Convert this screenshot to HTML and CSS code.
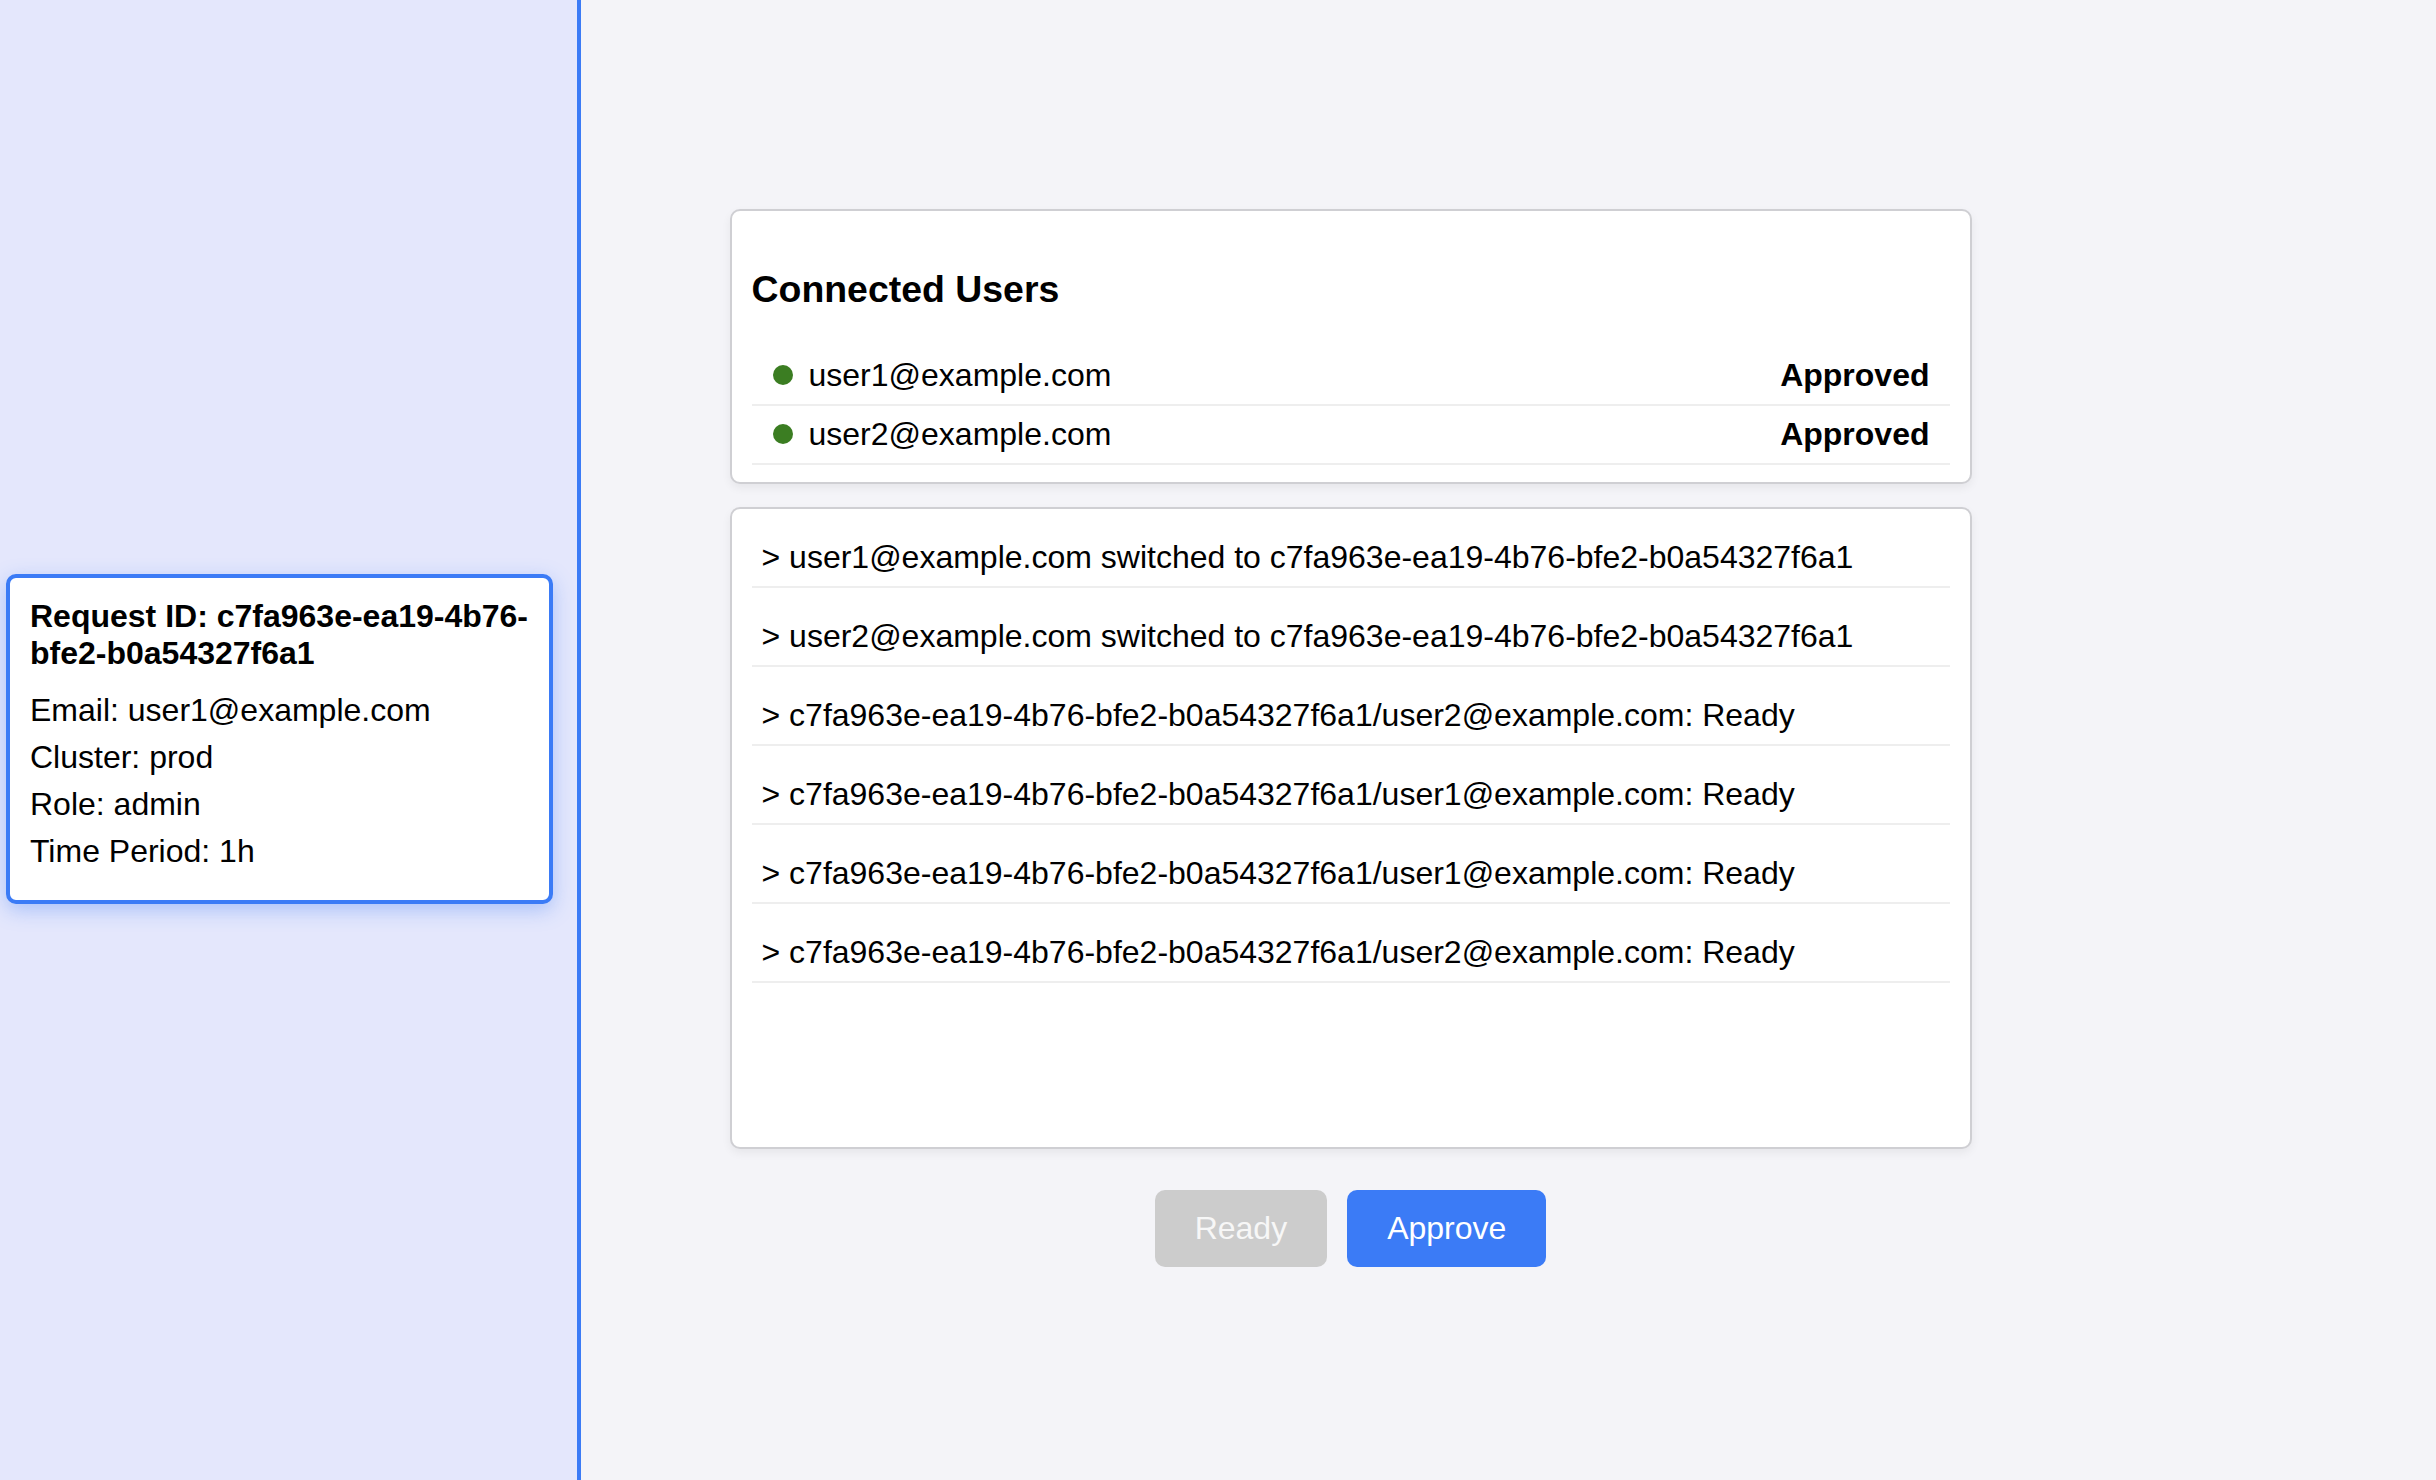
FILE: index.html
```html
<!DOCTYPE html>
<html lang="en">
<head>
<meta charset="utf-8">
<title>Request Approval</title>
<link rel="stylesheet" href="styles.css">
</head>
<body>
<div class="layout">
  <aside class="sidebar">
    <div class="request-card">
      <h4 class="request-title">Request ID: c7fa963e-ea19-4b76-bfe2-b0a54327f6a1</h4>
      <p class="request-line">Email: user1@example.com</p>
      <p class="request-line">Cluster: prod</p>
      <p class="request-line">Role: admin</p>
      <p class="request-line">Time Period: 1h</p>
    </div>
  </aside>
  <main class="main">
    <div class="column">
      <section class="panel users-panel">
        <h3 class="panel-title">Connected Users</h3>
        <ul class="user-list">
          <li class="user-row"><span class="user-name"><span class="dot"></span>user1@example.com</span><span class="user-status">Approved</span></li>
          <li class="user-row"><span class="user-name"><span class="dot"></span>user2@example.com</span><span class="user-status">Approved</span></li>
        </ul>
      </section>
      <section class="panel log-panel">
        <div class="log-row">&gt; user1@example.com switched to c7fa963e-ea19-4b76-bfe2-b0a54327f6a1</div>
        <div class="log-row">&gt; user2@example.com switched to c7fa963e-ea19-4b76-bfe2-b0a54327f6a1</div>
        <div class="log-row">&gt; c7fa963e-ea19-4b76-bfe2-b0a54327f6a1/user2@example.com: Ready</div>
        <div class="log-row">&gt; c7fa963e-ea19-4b76-bfe2-b0a54327f6a1/user1@example.com: Ready</div>
        <div class="log-row">&gt; c7fa963e-ea19-4b76-bfe2-b0a54327f6a1/user1@example.com: Ready</div>
        <div class="log-row">&gt; c7fa963e-ea19-4b76-bfe2-b0a54327f6a1/user2@example.com: Ready</div>
      </section>
      <div class="actions">
        <button class="btn btn-ready" type="button">Ready</button>
        <button class="btn btn-approve" type="button">Approve</button>
      </div>
    </div>
  </main>
</div>
</body>
</html>
```

FILE: styles.css
```css
* { box-sizing: border-box; }

html, body {
  margin: 0;
  padding: 0;
  height: 100%;
}

body {
  font-family: "Liberation Sans", Arial, sans-serif;
  font-size: 32px;
  color: #000;
  background: #f4f4f8;
}

.layout {
  display: flex;
  height: 1480px;
}

.sidebar {
  width: 581px;
  flex: none;
  background: #e4e7fc;
  border-right: 4px solid #3b7bf6;
  display: flex;
  flex-direction: column;
  justify-content: center;
  padding-left: 6px;
  padding-bottom: 3px;
}

.request-card {
  width: 547px;
  background: #fff;
  border: 4px solid #3b7bf6;
  border-radius: 10px;
  padding: 20px 12px 20px 20px;
  box-shadow: 0 6px 20px rgba(59, 123, 246, 0.35);
}

.request-title {
  margin: 0 0 20px;
  font-size: 32px;
  font-weight: bold;
  line-height: normal;
}

.request-line {
  margin: 10px 0;
  line-height: normal;
}

.main {
  flex: 1;
  display: flex;
  flex-direction: column;
  align-items: center;
  justify-content: center;
  padding-right: 316px;
  padding-bottom: 5px;
}

.column {
  width: 1242px;
  display: flex;
  flex-direction: column;
  align-items: stretch;
}

.panel {
  background: #fff;
  border: 2px solid #cfcfd3;
  border-radius: 10px;
  box-shadow: 0 4px 10px rgba(0, 0, 0, 0.06);
  padding: 20px;
}

.users-panel {
  padding-bottom: 17px;
}

.panel-title {
  margin: 37px 0 36px;
  font-size: 37.44px;
  font-weight: bold;
  line-height: normal;
}

.user-list {
  list-style: none;
  margin: 0;
  padding: 0;
}

.user-row {
  display: flex;
  align-items: center;
  justify-content: space-between;
  padding: 10px 20px 10px 21px;
  border-bottom: 2px solid #eeeeee;
  line-height: normal;
}

.user-name {
  display: flex;
  align-items: center;
}

.dot {
  width: 20px;
  height: 20px;
  border-radius: 50%;
  background: #3b7d22;
  margin-right: 16px;
  flex: none;
}

.user-status {
  font-weight: bold;
}

.log-panel {
  margin-top: 23px;
  height: 642px;
  display: flex;
  flex-direction: column;
  gap: 20px;
}

.log-row {
  padding: 10px;
  border-bottom: 2px solid #eeeeee;
  line-height: normal;
}

.actions {
  margin-top: 41px;
  display: flex;
  justify-content: center;
  gap: 20px;
}

.btn {
  font-family: "Liberation Sans", Arial, sans-serif;
  font-size: 32px;
  line-height: normal;
  padding: 20px 40px;
  border: none;
  border-radius: 10px;
  color: #fff;
  cursor: pointer;
}

.btn-ready {
  background: #cccccc;
  color: #f7f7f7;
}

.btn-approve {
  background: #3b7bf6;
}
```
